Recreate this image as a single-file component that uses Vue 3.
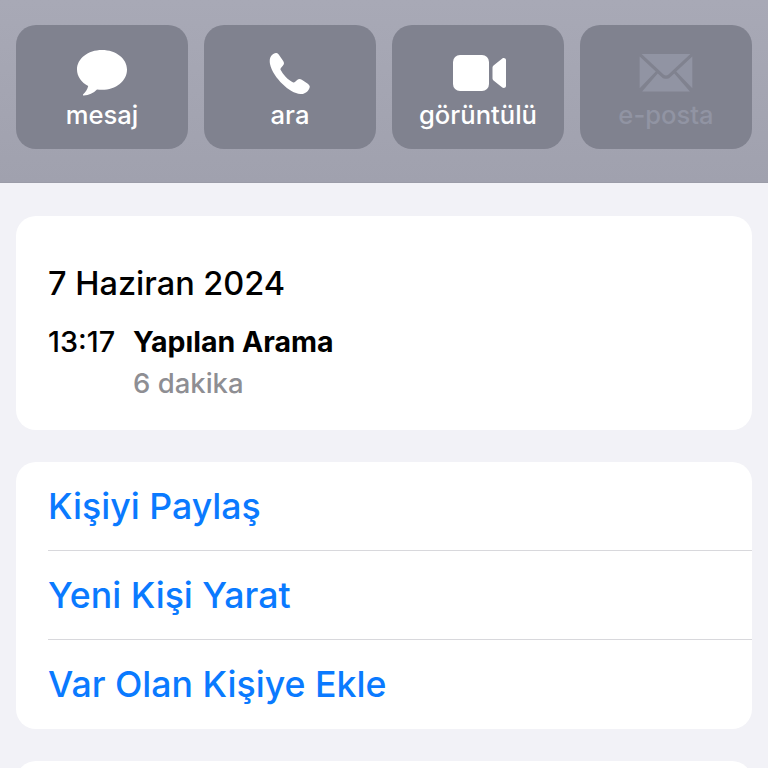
<script setup>
const actions = [
  { key: 'message', label: 'mesaj' },
  { key: 'call', label: 'ara' },
  { key: 'video', label: 'görüntülü' },
  { key: 'mail', label: 'e-posta', disabled: true },
];
const links = ['Kişiyi Paylaş', 'Yeni Kişi Yarat', 'Var Olan Kişiye Ekle'];
</script>

<template>
  <div class="page">
    <header class="top">
      <div
        v-for="a in actions"
        :key="a.key"
        class="action"
        :class="{ 'is-disabled': a.disabled }"
      >
        <div class="action__icon">
          <svg v-if="a.key === 'message'" width="52" height="48" viewBox="0 0 52 48">
            <path fill="#fff" d="M26 1C12 1 1 9.600 1 20.500c0 7 4.400 13 11.200 16.500-.6 3-2.600 6-5 8.200-.6.600-.2 1.500.7 1.400 4.800-.5 9.600-2.400 13.100-6.200 1.600.3 3.300.4 5 .4 14 0 25-8.700 25-20.300C51 9.600 40 1 26 1z" />
          </svg>
          <svg v-else-if="a.key === 'call'" width="42" height="42" viewBox="0 0 42 42">
            <path fill="#fff" d="M2.500 3.500C4 1.800 6 .8 7.500 1.100c1.100.2 2 1 2.900 2.300l3.800 5.700c1.200 1.800 1 3.200-.4 4.700l-1.700 1.900c-.7.800-.8 1.500-.4 2.400 1.200 2.300 2.900 4.600 5.100 6.800 2.300 2.300 4.700 4.100 7 5.300.9.400 1.600.3 2.400-.4l1.900-1.700c1.500-1.400 3-1.600 4.700-.4l5.300 3.600c1.400 1 2.300 1.900 2.600 3 .3 1.500-.7 3.500-2.400 5.100-1.900 1.800-4.200 2.700-6.800 2.600-5.700-.2-12.400-4.300-18-9.900C7.900 26.800 2.300 19 1 12.100.4 8.600.7 5.600 2.500 3.500z" />
          </svg>
          <svg v-else-if="a.key === 'video'" width="56" height="36" viewBox="-3 0 56 36">
            <rect x="0" y="0" width="36" height="36" rx="7" fill="#fff" />
            <path fill="#fff" d="M39.500 12.500c0-.8.300-1.500 1-2l8.800-7c1.300-1 3.700-.4 3.700 1.500v26c0 1.900-2.400 2.500-3.700 1.500l-8.800-7c-.7-.5-1-1.200-1-2z" />
          </svg>
          <svg v-else width="54" height="39" viewBox="0 0 54 40">
            <path fill="#9194a3" d="M2 0h50L29.500 21c-1.500 1.300-3.500 1.300-5 0z" />
            <path fill="#9194a3" d="M0 2.500 16.500 18 0 35zM54 2.500 37.500 18 54 35z" />
            <path fill="#9194a3" d="M2.500 38.500 18.500 20l4.500 4c2.300 2 5.700 2 8 0l4.500-4 16 18.500z" />
          </svg>
        </div>
        <span class="action__label">{{ a.label }}</span>
      </div>
    </header>

    <main class="body">
      <section class="card call">
        <div class="call__date">7 Haziran 2024</div>
        <div class="call__row">
          <span class="call__time">13:17</span>
          <div>
            <div class="call__type">Yapılan Arama</div>
            <div class="call__len">6 dakika</div>
          </div>
        </div>
      </section>

      <section class="card links">
        <div v-for="l in links" :key="l" class="links__row">{{ l }}</div>
      </section>

      <section class="card rest"></section>
    </main>
  </div>
</template>

<style>
html, body { margin: 0; background: #f2f2f7; }
</style>

<style scoped>
.page {
  width: 768px;
  height: 768px;
  overflow: hidden;
  background: #f2f2f7;
  font-family: Inter, "Liberation Sans", sans-serif;
}
.top {
  height: 183px;
  box-sizing: border-box;
  padding: 25px 16px 0;
  display: flex;
  gap: 16px;
  background: linear-gradient(#a8a9b6, #a0a1ae);
  border-bottom: 1px solid #9b9ca8;
}
.action {
  width: 172px;
  height: 124px;
  border-radius: 20px;
  background: #80828f;
  display: flex;
  flex-direction: column;
  align-items: center;
  color: #fff;
}
.action__icon {
  height: 54px;
  margin-top: 21px;
  display: flex;
  align-items: center;
  justify-content: center;
}
.action__label {
  margin-top: -1px;
  font-size: 25.6px;
  line-height: 32px;
  font-weight: 500;
}
.is-disabled .action__label { color: #9194a3; }

.body {
  padding: 33px 16px 0;
  display: flex;
  flex-direction: column;
  gap: 32px;
}
.card {
  background: #fff;
  border-radius: 20px;
}
.call {
  height: 214px;
  box-sizing: border-box;
  padding: 48px 32px 0;
}
.call__date {
  font-size: 32.500px;
  line-height: 40px;
  font-weight: 500;
  color: #000;
}
.call__row {
  display: flex;
  margin-top: 18px;
}
.call__time {
  width: 85px;
  font-size: 28.800px;
  line-height: 40px;
  font-weight: 500;
  color: #000;
}
.call__type {
  font-size: 28.500px;
  line-height: 40px;
  font-weight: 700;
  color: #000;
}
.call__len {
  margin-top: 1px;
  font-size: 27.500px;
  line-height: 40px;
  font-weight: 500;
  color: #8e8e93;
}
.links {
  padding-left: 32px;
}
.links__row {
  height: 89px;
  box-sizing: border-box;
  line-height: 88px;
  font-size: 35.700px;
  font-weight: 550;
  color: #0a7aff;
  border-bottom: 1px solid #d8d8dc;
}
.links__row:last-child { border-bottom: 0; }
.rest {
  height: 60px;
  flex: none;
}
</style>
